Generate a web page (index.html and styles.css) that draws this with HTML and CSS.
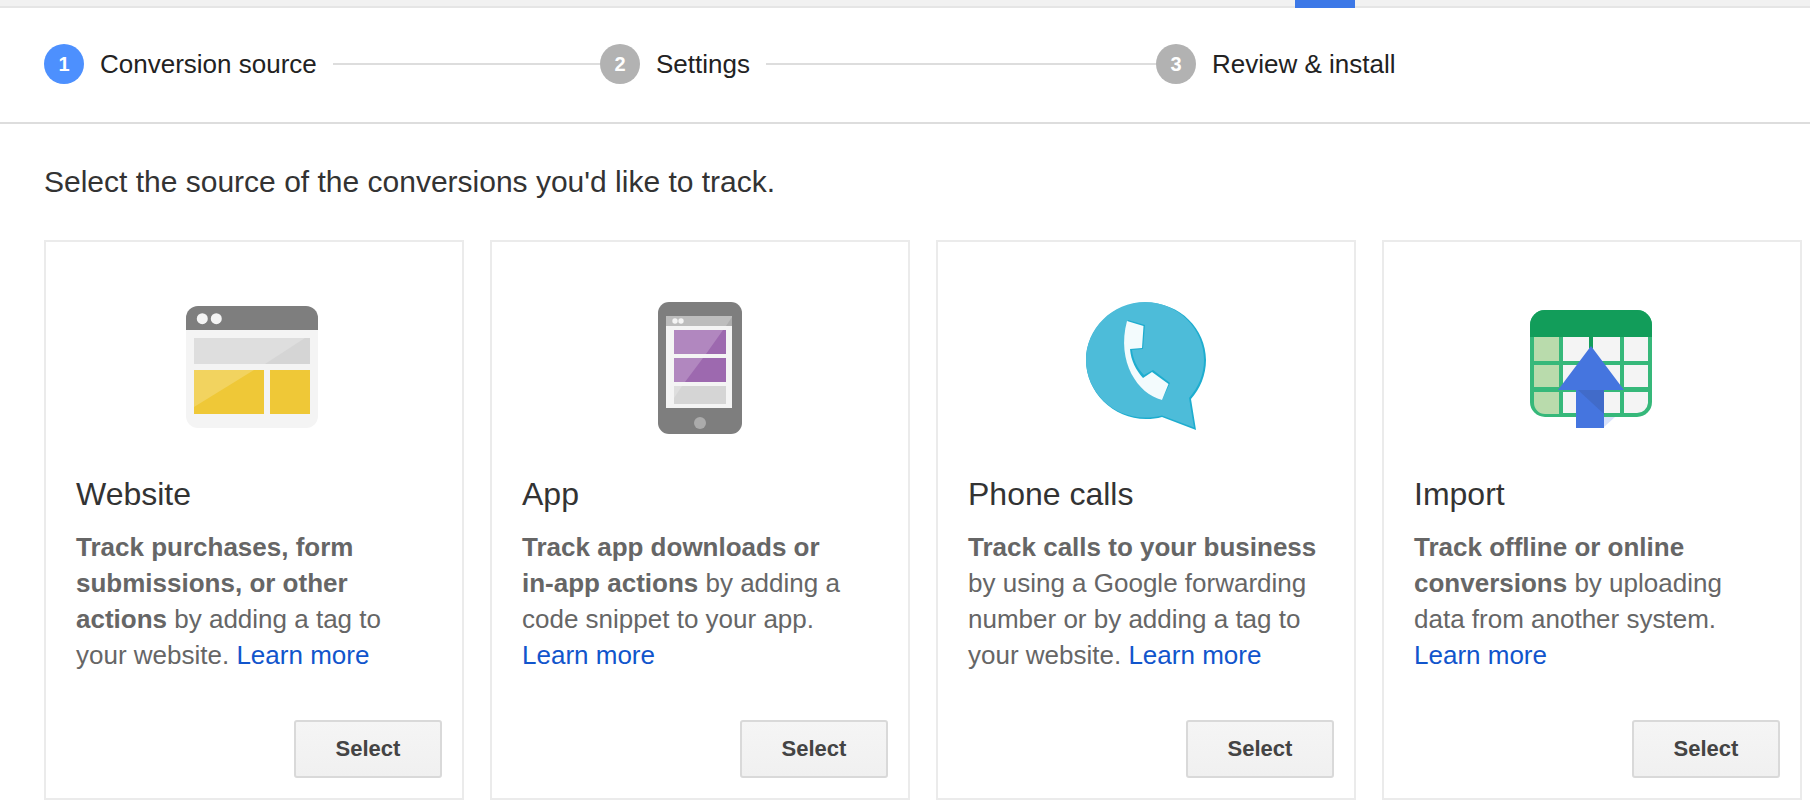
FILE: index.html
```html
<!DOCTYPE html>
<html lang="en">

<head>
  <meta charset="utf-8">
  <title>Conversion source</title>
  <meta name="viewport" content="width=device-width, initial-scale=1">
  <link rel="stylesheet" href="styles.css">
</head>

<body>

  <div class="topbar"><div class="tab"></div></div>

  <ol class="steps">
    <li class="active"><span class="num">1</span><span class="label">Conversion source</span></li>
    <li><span class="num">2</span><span class="label">Settings</span></li>
    <li><span class="num">3</span><span class="label">Review &amp; install</span></li>
  </ol>

  <main class="content">
    <h1>Select the source of the conversions you'd like to track.</h1>

    <div class="cards">
      <section class="card">
        <svg class="icon" viewBox="0 0 140 132" aria-hidden="true">
          <rect x="2" y="4" width="132" height="122" rx="12" fill="#f4f4f4"/>
          <path d="M2 28V16A12 12 0 0 1 14 4H122A12 12 0 0 1 134 16V28Z" fill="#7e7e7e"/>
          <circle cx="18.3" cy="16.7" r="5.5" fill="#f4f4f4"/>
          <circle cx="32.3" cy="16.7" r="5.5" fill="#f4f4f4"/>
          <path d="M10 36H126V62H10Z" fill="#dedede"/>
          <path d="M121 36H126V62H81Z" fill="#d5d5d5"/>
          <path d="M10 68H80V112H10ZM86 68H126V112H86Z" fill="#efc837"/>
          <path d="M10 68H70L10 105Z" fill="#f2d35f"/>
        </svg>
        <h2>Website</h2>
        <p><b>Track purchases, form submissions, or other actions</b> by adding a tag to your website. <a href="#">Learn more</a></p>
        <button type="button">Select</button>
      </section>

      <section class="card">
        <svg class="icon" viewBox="0 0 140 132" aria-hidden="true">
          <rect x="28" width="84" height="132" rx="11" fill="#7e7e7e"/>
          <path d="M36 14H102V106H36Z" fill="#f4f4f4"/>
          <path d="M36 14H102V24H36Z" fill="#bdbdbd"/>
          <path d="M102 15V24H96Z" fill="#adadad"/>
          <circle cx="45" cy="19" r="2.7" fill="#f4f4f4"/>
          <circle cx="51" cy="19" r="2.7" fill="#f4f4f4"/>
          <path d="M44 28H96V52H44ZM44 56H96V80H44Z" fill="#9d69af"/>
          <path d="M44 28H93L76 52H44ZM44 56H73L55 80H44Z" fill="#b187bf"/>
          <path d="M44 84H96V102H44Z" fill="#d5d5d5"/>
          <path d="M44 84H52L44 96Z" fill="#dedede"/>
          <circle cx="70" cy="121" r="6" fill="#ababab"/>
        </svg>
        <h2>App</h2>
        <p><b>Track app downloads or <span class="nowrap">in-app</span> actions</b> by adding a code snippet to your app. <a href="#">Learn more</a></p>
        <button type="button">Select</button>
      </section>

      <section class="card">
        <svg class="icon" viewBox="0 0 140 132" aria-hidden="true">
          <path d="M70 0.5C104 0.5 130 27 130 58C130 73 124 87 115 97L120 128L86 115C81 116.500 76 117 70 117C37 117 10 90 10 58C10 27 37 0.500 70 0.500Z" fill="#1eadcf"/>
          <path d="M69 0C102 0 128 27 128 58C128 73 122 86 113 96L118 125.500L86 113.500C80 115 75 115.500 69 115.500C36 115.500 10 89 10 58C10 27 36 0 69 0Z" fill="#4dbcd9"/>
          <path d="M52 18L69 23L67 47L56 48C57 57 61 66 68 73L77 68L94 81L86 98C62 92 40 60 52 18Z" fill="#1eadcf"/>
          <path d="M51 19L67.500 24L66 46L54 47C55 59 60 68 67 76L76 70L92.500 82L86 98C62 92 40 60 51 19Z" fill="#f3fbfd"/>
        </svg>
        <h2>Phone calls</h2>
        <p><b>Track calls to your business</b> by using a Google forwarding number or by adding a tag to your website. <a href="#">Learn more</a></p>
        <button type="button">Select</button>
      </section>

      <section class="card">
        <svg class="icon" viewBox="0 0 140 132" aria-hidden="true">
          <rect x="8" y="8" width="122" height="107" rx="15" fill="#36b87a"/>
          <path d="M8 35V23A15 15 0 0 1 23 8H115A15 15 0 0 1 130 23V35Z" fill="#129d5a"/>
          <path d="M12 35H37V59H12ZM12 63H37V85H12ZM12 90H37V112H23A11 11 0 0 1 12 101Z" fill="#b9dbac"/>
          <path d="M41 35H67V59H41ZM71 35H98V59H71ZM102 35H126V59H102ZM41 63H67V85H41ZM71 63H98V85H71ZM102 63H126V85H102ZM41 90H67V111H41ZM71 90H98V111H71ZM102 90H126V101A11 11 0 0 1 115 111H102Z" fill="#f4f4f4"/>
          <path d="M67 35H71V46H67Z" fill="#129d5a"/>
          <path d="M82 115H93L82 125Z" fill="#d9e3fb"/>
          <path d="M69 44L102 88H82V126H54V88H36Z" fill="#4575df"/>
          <path d="M56 88H82V112Z" fill="#416bc9"/>
        </svg>
        <h2>Import</h2>
        <p><b>Track offline or online conversions</b> by uploading data from another system. <a href="#">Learn more</a></p>
        <button type="button">Select</button>
      </section>
    </div>
  </main>

</body>

</html>
```
FILE: styles.css
```css
* {
  box-sizing: border-box;
}

body {
  margin: 0;
  background: #fff;
  color: #333;
  font-family: "Liberation Sans", Arial, sans-serif;
  font-size: 26px;
}

/* Bottom edge of the navigation, with the current tab marked */
.topbar {
  display: grid;
  grid-template-columns: 1295fr 60px 455fr;
  height: 8px;
  background: linear-gradient(#f1f1f1 6px, #e5e5e5 6px);
}

.tab {
  grid-column: 2;
  background: #3c78e7;
}

/* Progress steps */
.steps {
  display: flex;
  margin: 0;
  padding: 36px 44px 38px;
  list-style: none;
  border-bottom: 2px solid #ddd;
}

.steps li {
  display: flex;
  flex: 0 1 556px;
  align-items: center;
  gap: 16px;
  color: #222;
  line-height: 40px;
  white-space: nowrap;
}

/* Line that joins a step to the next one */
.steps li:not(:last-child)::after {
  content: "";
  flex: 1;
  height: 2px;
  background: #ddd;
}

/* The line runs up to the next circle */
.num {
  flex: none;
  width: 40px;
  height: 40px;
  border-radius: 50%;
  background: #b2b2b2;
  color: #fff;
  font-size: 20px;
  font-weight: bold;
  text-align: center;
}

.active .num {
  background: #4d90fe;
}

.content {
  padding: 40px 8px 8px 44px;
}

h1 {
  margin: 0 0 40px;
  font-size: 30px;
  font-weight: normal;
  line-height: 36px;
}

.cards {
  display: grid;
  grid-template-columns: repeat(4, 1fr);
  gap: 26px;
}

.card {
  display: flex;
  flex-direction: column;
  padding: 60px 30px 20px;
  border: 2px solid #ebebeb;
}

.icon {
  width: 140px;
  height: 132px;
  margin: 0 auto;
}

.card h2 {
  margin: 40px 0 15px;
  font-size: 32px;
  font-weight: normal;
  line-height: 40px;
}

.card p {
  margin: 0 0 47px;
  color: #666;
  line-height: 36px;
}

.nowrap {
  white-space: nowrap;
}

.card a {
  color: #15c;
  text-decoration: none;
}

.card a:hover {
  text-decoration: underline;
}

.card button {
  align-self: flex-end;
  width: 148px;
  height: 58px;
  margin: auto -10px 0 0;
  border: 2px solid #d9d9d9;
  border-radius: 3px;
  background: linear-gradient(#f5f5f5, #f0f0f0);
  color: #444;
  font: bold 22px "Liberation Sans", Arial, sans-serif;
  cursor: pointer;
}

.card button:hover {
  border-color: #c6c6c6;
  color: #222;
}
```
